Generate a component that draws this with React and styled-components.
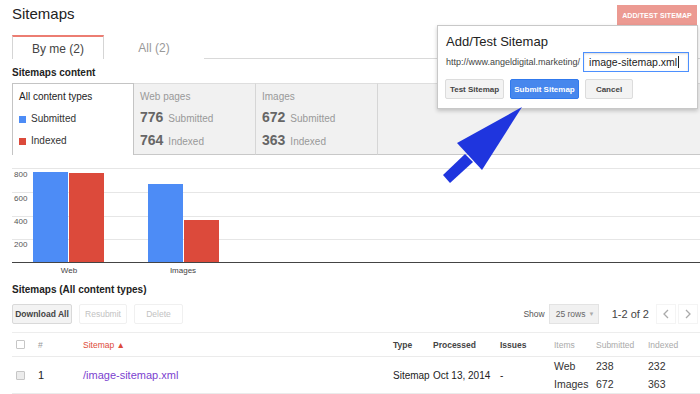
import React from "react";
import styled, { createGlobalStyle } from "styled-components";

const Global = createGlobalStyle`
  html, body { margin: 0; padding: 0; background: #fff; }
  body { font-family: "Liberation Sans", Arial, sans-serif; color: #222; }
  * { box-sizing: border-box; }
`;

const Page = styled.div`
  position: relative;
  width: 700px;
  height: 394px;
  overflow: hidden;
  padding-left: 12px;
`;

const Header = styled.div`
  display: flex;
  justify-content: space-between;
  align-items: flex-start;
  height: 30px;
`;

const Title = styled.h1`
  margin: 5px 0 0;
  font-size: 15px;
  line-height: 18px;
  font-weight: normal;
  color: #222;
`;

const RedButton = styled.div`
  margin: 5px 3px 0 0;
  height: 20px;
  width: 80px;
  background: #ec9a92;
  color: #fff;
  font-size: 7px;
  font-weight: bold;
  display: flex;
  align-items: center;
  justify-content: center;
  letter-spacing: 0.1px;
`;

const TabBar = styled.div`
  margin-top: 5px;
  display: flex;
  height: 24px;
  border-bottom: 1px solid #d9d9d9;
`;

const Tab = styled.div`
  width: ${(p) => (p.$active ? "92px" : "100px")};
  height: 24px;
  display: flex;
  align-items: center;
  justify-content: center;
  font-size: 12px;
  color: ${(p) => (p.$active ? "#444" : "#999")};
  background: #fff;
  border: ${(p) => (p.$active ? "1px solid #d5d5d5" : "none")};
  border-top: ${(p) => (p.$active ? "2px solid #ec7d72" : "none")};
  border-bottom: none;
  padding-top: 1px;
`;

const SectionLabel = styled.div`
  height: ${(p) => p.$h}px;
  padding-top: ${(p) => p.$pt}px;
  font-size: 10px;
  line-height: 12px;
  font-weight: bold;
  color: #222;
`;

const Panels = styled.div`
  display: flex;
  height: 72px;
`;

const Panel = styled.div`
  width: ${(p) => (p.$grow ? "auto" : "122px")};
  flex: ${(p) => (p.$grow ? "1" : "none")};
  background: ${(p) => (p.$active ? "#fff" : "#f1f1f1")};
  border-top: 1px solid ${(p) => (p.$active ? "#c4c4c4" : "#dedede")};
  border-left: ${(p) => (p.$active ? "1px solid #c4c4c4" : "none")};
  border-right: ${(p) => (p.$grow ? "none" : p.$active ? "1px solid #c4c4c4" : "1px solid #d6d6d6")};
  border-bottom: ${(p) => (p.$active ? "none" : "1px solid #c8c8c8")};
  padding: 7px 0 0 6px;
  display: flex;
  flex-direction: column;
`;

const PanelHead = styled.div`
  font-size: 10px;
  line-height: 12px;
  color: ${(p) => (p.$dark ? "#222" : "#999")};
  margin-bottom: ${(p) => (p.$dark ? "10px" : "6px")};
`;

const LegendRow = styled.div`
  display: flex;
  align-items: center;
  gap: 5px;
  font-size: 10px;
  line-height: 12px;
  color: #333;
  height: 12px;
  margin-bottom: 10px;
`;

const Swatch = styled.span`
  width: 7px;
  height: 7px;
  background: ${(p) => p.$c};
  display: inline-block;
`;

const StatRow = styled.div`
  display: flex;
  align-items: baseline;
  gap: 5px;
  height: 23px;
`;

const StatNum = styled.span`
  font-size: 14px;
  font-weight: bold;
  color: #666;
`;

const StatLabel = styled.span`
  font-size: 10px;
  color: #999;
`;

const ChartBox = styled.div`
  height: 128px;
  margin-left: -12px;
`;

const Toolbar = styled.div`
  margin-top: 7px;
  height: 20px;
  display: flex;
  align-items: center;
`;

const ToolButton = styled.div`
  height: 20px;
  width: ${(p) => p.$w}px;
  margin-right: 7px;
  display: flex;
  align-items: center;
  justify-content: center;
  font-size: 8.5px;
  font-weight: ${(p) => (p.$disabled ? "normal" : "bold")};
  color: ${(p) => (p.$disabled ? "#c2c2c2" : "#444")};
  background: ${(p) => (p.$disabled ? "#fff" : "#f3f3f3")};
  border: 1px solid ${(p) => (p.$disabled ? "#f0f0f0" : "#d9d9d9")};
  border-radius: 2px;
`;

const Spacer = styled.div`
  flex: 1;
`;

const ShowLabel = styled.span`
  font-size: 8.5px;
  color: #555;
  margin-right: 4px;
`;

const Select = styled.div`
  height: 20px;
  width: 50px;
  background: #f1f1f1;
  border: 1px solid #e3e3e3;
  font-size: 8.5px;
  color: #666;
  display: flex;
  align-items: center;
  padding-left: 6px;
  gap: 3px;
  margin-right: 13px;
`;

const Caret = styled.span`
  font-size: 6px;
  color: #aaa;
`;

const PageCount = styled.span`
  font-size: 11px;
  color: #444;
  margin-right: 7px;
`;

const PagerBtn = styled.div`
  width: 20px;
  height: 20px;
  display: flex;
  align-items: center;
  justify-content: center;
  border: 1px solid #f4f4f4;
  margin-right: 2px;
  color: #bbb;
`;

const Table = styled.div`
  margin-top: 8px;
  border-top: 1px solid #ededed;
`;

const Row = styled.div`
  display: grid;
  grid-template-columns: 26px 45px 310px 40px 67px 54px 42px 52px 1fr;
  align-items: center;
  height: ${(p) => p.$h}px;
  border-bottom: 1px solid #ebebeb;
  white-space: nowrap;
`;

const HeadCell = styled.div`
  font-size: 8.5px;
  font-weight: ${(p) => (p.$bold ? "bold" : "normal")};
  color: ${(p) => p.$c || "#444"};
`;

const Cell = styled.div`
  font-size: ${(p) => (p.$small ? "10px" : "11px")};
  color: #222;
`;

const LinkCell = styled.a`
  font-size: 11px;
  color: #7b3fcf;
  text-decoration: none;
`;

const Check = styled.span`
  display: block;
  width: 9px;
  height: 9px;
  margin-left: 4px;
  border: 1px solid #c6c6c6;
  border-radius: 1px;
  background: ${(p) => (p.$filled ? "#ececec" : "#fff")};
`;

const Stack = styled.div`
  grid-column: ${(p) => p.$col};
  display: flex;
  flex-direction: column;
`;

const StackLine = styled.div`
  font-size: 10.5px;
  color: #333;
  height: 18px;
  line-height: 18px;
`;

const Dialog = styled.div`
  position: absolute;
  left: 437px;
  top: 25px;
  width: 261px;
  height: 84px;
  background: #fff;
  border: 1px solid #c8c8c8;
  box-shadow: 0 2px 4px rgba(0, 0, 0, 0.2);
  padding: 8px 0 0 8px;
`;

const DialogTitle = styled.div`
  font-size: 13px;
  line-height: 16px;
  color: #222;
`;

const DialogRow = styled.div`
  display: flex;
  align-items: center;
  margin-top: 2px;
  height: 20px;
  white-space: nowrap;
`;

const UrlText = styled.span`
  font-size: 9px;
  color: #444;
  margin-right: 3px;
`;

const Input = styled.div`
  width: 106px;
  height: 20px;
  border: 1px solid #4d90fe;
  box-shadow: inset 0 1px 2px rgba(0, 0, 0, 0.15);
  font-size: 10.5px;
  color: #222;
  display: flex;
  align-items: center;
  padding-left: 5px;
  white-space: nowrap;
`;

const Cursor = styled.span`
  display: inline-block;
  width: 1px;
  height: 12px;
  background: #222;
  margin-left: 1px;
`;

const DialogButtons = styled.div`
  display: flex;
  gap: 6px;
  margin-top: 7px;
  margin-left: -1px;
`;

const DlgBtn = styled.div`
  height: 20px;
  width: ${(p) => p.$w}px;
  display: flex;
  align-items: center;
  justify-content: center;
  font-size: 8px;
  font-weight: bold;
  color: ${(p) => (p.$primary ? "#fff" : "#444")};
  background: ${(p) => (p.$primary ? "#4787ed" : "#f3f3f3")};
  border: 1px solid ${(p) => (p.$primary ? "#3079ed" : "#dcdcdc")};
  border-radius: 2px;
`;

const Overlay = styled.svg`
  position: absolute;
  left: 0;
  top: 0;
  pointer-events: none;
`;

function Chart() {
  const grid = [13, 37, 61, 84];
  const labels = ["800", "600", "400", "200"];
  const labelY = [22, 46, 69, 92];
  return (
    <svg width="700" height="128">
      {grid.map((y) => (
        <line key={y} x1="12" x2="700" y1={y + 0.5} y2={y + 0.5} stroke="#e6e6e6" />
      ))}
      {labels.map((l, i) => (
        <text key={l} x="14" y={labelY[i]} fontSize="8" fill="#555" fontFamily="Liberation Sans, Arial, sans-serif">
          {l}
        </text>
      ))}
      <rect x="33" y="17" width="35" height="90" fill="#4d8cf6" />
      <rect x="69" y="18" width="35" height="89" fill="#dc4a3b" />
      <rect x="148" y="29" width="35" height="78" fill="#4d8cf6" />
      <rect x="184" y="65" width="35" height="42" fill="#dc4a3b" />
      <line x1="12" x2="700" y1="107.5" y2="107.5" stroke="#444" />
      <text x="69" y="118" fontSize="8" fill="#444" textAnchor="middle" fontFamily="Liberation Sans, Arial, sans-serif">Web</text>
      <text x="183" y="118" fontSize="8" fill="#444" textAnchor="middle" fontFamily="Liberation Sans, Arial, sans-serif">Images</text>
    </svg>
  );
}

export default function App() {
  return (
    <>
      <Global />
      <Page>
        <Header>
          <Title>Sitemaps</Title>
          <RedButton>ADD/TEST SITEMAP</RedButton>
        </Header>
        <TabBar>
          <Tab $active>By me (2)</Tab>
          <Tab>All (2)</Tab>
        </TabBar>
        <SectionLabel $h={24} $pt={8}>Sitemaps content</SectionLabel>
        <Panels>
          <Panel $active>
            <PanelHead $dark>All content types</PanelHead>
            <LegendRow>
              <Swatch $c="#4d8cf6" />
              Submitted
            </LegendRow>
            <LegendRow>
              <Swatch $c="#dc4a3b" />
              Indexed
            </LegendRow>
          </Panel>
          <Panel>
            <PanelHead>Web pages</PanelHead>
            <StatRow>
              <StatNum>776</StatNum>
              <StatLabel>Submitted</StatLabel>
            </StatRow>
            <StatRow>
              <StatNum>764</StatNum>
              <StatLabel>Indexed</StatLabel>
            </StatRow>
          </Panel>
          <Panel>
            <PanelHead>Images</PanelHead>
            <StatRow>
              <StatNum>672</StatNum>
              <StatLabel>Submitted</StatLabel>
            </StatRow>
            <StatRow>
              <StatNum>363</StatNum>
              <StatLabel>Indexed</StatLabel>
            </StatRow>
          </Panel>
          <Panel $grow />
        </Panels>
        <ChartBox>
          <Chart />
        </ChartBox>
        <SectionLabel $h={14} $pt={1}>Sitemaps (All content types)</SectionLabel>
        <Toolbar>
          <ToolButton $w={60}>Download All</ToolButton>
          <ToolButton $w={48} $disabled>Resubmit</ToolButton>
          <ToolButton $w={49} $disabled>Delete</ToolButton>
          <Spacer />
          <ShowLabel>Show</ShowLabel>
          <Select>
            25 rows <Caret>▼</Caret>
          </Select>
          <PageCount>1-2 of 2</PageCount>
          <PagerBtn>
            <svg width="8" height="10" viewBox="0 0 8 10">
              <path d="M6 1 L2 5 L6 9" fill="none" stroke="#aaa" strokeWidth="1.3" />
            </svg>
          </PagerBtn>
          <PagerBtn>
            <svg width="8" height="10" viewBox="0 0 8 10">
              <path d="M2 1 L6 5 L2 9" fill="none" stroke="#aaa" strokeWidth="1.3" />
            </svg>
          </PagerBtn>
        </Toolbar>
        <Table>
          <Row $h={24}>
            <Check />
            <HeadCell $c="#999">#</HeadCell>
            <HeadCell $c="#dd4b39">Sitemap ▲</HeadCell>
            <HeadCell $bold>Type</HeadCell>
            <HeadCell $bold>Processed</HeadCell>
            <HeadCell $bold>Issues</HeadCell>
            <HeadCell $c="#aaa">Items</HeadCell>
            <HeadCell $c="#aaa">Submitted</HeadCell>
            <HeadCell $c="#aaa">Indexed</HeadCell>
          </Row>
          <Row $h={37}>
            <Check $filled />
            <Cell>1</Cell>
            <LinkCell>/image-sitemap.xml</LinkCell>
            <Cell $small>Sitemap</Cell>
            <Cell $small>Oct 13, 2014</Cell>
            <Cell $small>-</Cell>
            <Stack $col="7">
              <StackLine>Web</StackLine>
              <StackLine>Images</StackLine>
            </Stack>
            <Stack $col="8">
              <StackLine>238</StackLine>
              <StackLine>672</StackLine>
            </Stack>
            <Stack $col="9">
              <StackLine>232</StackLine>
              <StackLine>363</StackLine>
            </Stack>
          </Row>
        </Table>

        <Dialog>
          <DialogTitle>Add/Test Sitemap</DialogTitle>
          <DialogRow>
            <UrlText>http://www.angeldigital.marketing/</UrlText>
            <Input>
              image-sitemap.xml
              <Cursor />
            </Input>
          </DialogRow>
          <DialogButtons>
            <DlgBtn $w={59}>Test Sitemap</DlgBtn>
            <DlgBtn $w={69} $primary>Submit Sitemap</DlgBtn>
            <DlgBtn $w={48}>Cancel</DlgBtn>
          </DialogButtons>
        </Dialog>

        <Overlay width="700" height="394">
          <polygon points="522,107 457,143 482,170" fill="#1f35de" />
          <polygon points="443,175 465,154 473,162 450,183" fill="#1f35de" />
        </Overlay>
      </Page>
    </>
  );
}
